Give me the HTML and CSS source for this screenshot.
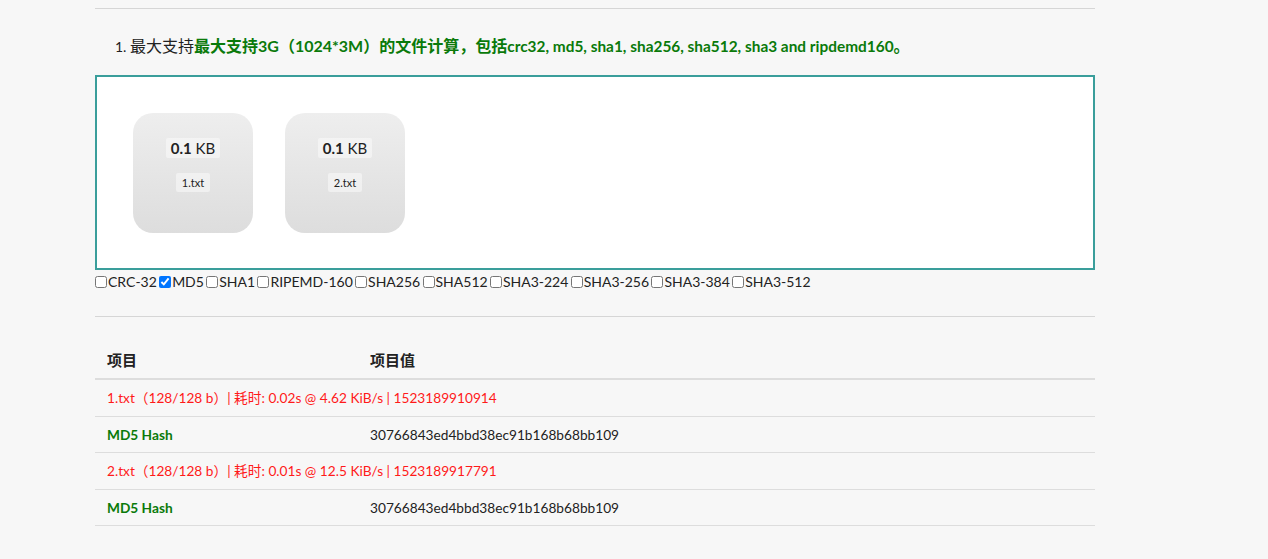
FILE: index.html
```html
<!DOCTYPE html>
<html lang="zh">
<head>
<meta charset="utf-8">
<link rel="stylesheet" href="styles.css">
</head>
<body>
<div class="container">
  <hr class="rule rule-top">
  <ol class="notes">
    <li>最大支持<strong class="green">最大支持3G（1024*3M）的文件计算，包括<span class="latin">crc32, md5, sha1, sha256, sha512, sha3 and ripdemd160</span>。</strong></li>
  </ol>
  <div class="dropzone">
    <div class="preview">
      <div class="size"><strong>0.1</strong> KB</div>
      <div class="fname">1.txt</div>
    </div>
    <div class="preview">
      <div class="size"><strong>0.1</strong> KB</div>
      <div class="fname">2.txt</div>
    </div>
  </div>
  <div class="algos">
    <label><input type="checkbox">CRC-32</label>
    <label><input type="checkbox" checked>MD5</label>
    <label><input type="checkbox">SHA1</label>
    <label><input type="checkbox">RIPEMD-160</label>
    <label><input type="checkbox">SHA256</label>
    <label><input type="checkbox">SHA512</label>
    <label><input type="checkbox">SHA3-224</label>
    <label><input type="checkbox">SHA3-256</label>
    <label><input type="checkbox">SHA3-384</label>
    <label><input type="checkbox">SHA3-512</label>
  </div>
  <hr class="rule rule-mid">
  <table class="results">
    <thead>
      <tr><th class="c1">项目</th><th>项目值</th></tr>
    </thead>
    <tbody>
      <tr class="info"><td colspan="2">1.txt（128/128 b）| 耗时: 0.02s @ 4.62 KiB/s | 1523189910914</td></tr>
      <tr><td class="key">MD5 Hash</td><td>30766843ed4bbd38ec91b168b68bb109</td></tr>
      <tr class="info"><td colspan="2">2.txt（128/128 b）| 耗时: 0.01s @ 12.5 KiB/s | 1523189917791</td></tr>
      <tr><td class="key">MD5 Hash</td><td>30766843ed4bbd38ec91b168b68bb109</td></tr>
    </tbody>
  </table>
</div>
</body>
</html>
```
FILE: styles.css
```css
html, body {
  margin: 0;
  padding: 0;
  background: #f7f7f7;
}
body {
  font-family: "Lato", "Noto Sans CJK SC", sans-serif;
  font-size: 14px;
  color: #222;
}
.container {
  width: 1000px;
  margin-left: 95px;
}
.rule {
  border: 0;
  border-top: 1px solid #d6d6d6;
  margin: 0;
}
.rule-top {
  margin-top: 8px;
}
.notes {
  margin: 26px 0 0 0;
  padding-left: 35px;
  line-height: 22px;
}
.notes li {
  font-size: 16px;
}
.notes li::marker {
  font-size: 14px;
}
.notes .latin {
  font-size: 15.4px;
}
.green {
  color: #0a7a0a;
}
.dropzone {
  margin-top: 18px;
  height: 195px;
  background: #fff;
  border: 2px solid #3a9e9b;
  display: flex;
  gap: 32px;
  padding: 36px 0 0 36px;
  box-sizing: border-box;
}
.preview {
  width: 120px;
  height: 120px;
  border-radius: 20px;
  background: linear-gradient(to bottom, #eeeeee, #dddddd);
  display: flex;
  flex-direction: column;
  align-items: center;
}
.size {
  margin-top: 25px;
  font-size: 15px;
  line-height: 20px;
  padding: 0 5px;
  background: rgba(255,255,255,0.45);
  border-radius: 2px;
}
.fname {
  margin-top: 15px;
  font-size: 11px;
  line-height: 19px;
  padding: 0 6px;
  background: rgba(255,255,255,0.45);
  border-radius: 2px;
}
.algos {
  display: flex;
  flex-wrap: wrap;
  line-height: 24px;
  font-size: 14px;
}
.algos label {
  display: flex;
  align-items: center;
  margin-right: 2.3px;
}
.algos input {
  margin: 0 1px 0 0;
  width: 12px;
  height: 12px;
}
.rule-mid {
  margin-top: 22px;
}
.results {
  width: 100%;
  border-collapse: collapse;
  margin-top: 25px;
  font-size: 13.7px;
}
.results th {
  text-align: left;
  font-size: 15px;
  font-weight: bold;
  padding: 8px 12px;
  line-height: 20px;
  border-bottom: 2px solid #dddddd;
}
.results th.c1 {
  width: 239px;
}
.results td {
  padding: 8px 12px;
  line-height: 19.6px;
  border-bottom: 1px solid #dddddd;
}
.results tr.info td {
  color: #ff1a1a;
}
.results td.key {
  color: #0a7a0a;
  font-weight: bold;
}
```
